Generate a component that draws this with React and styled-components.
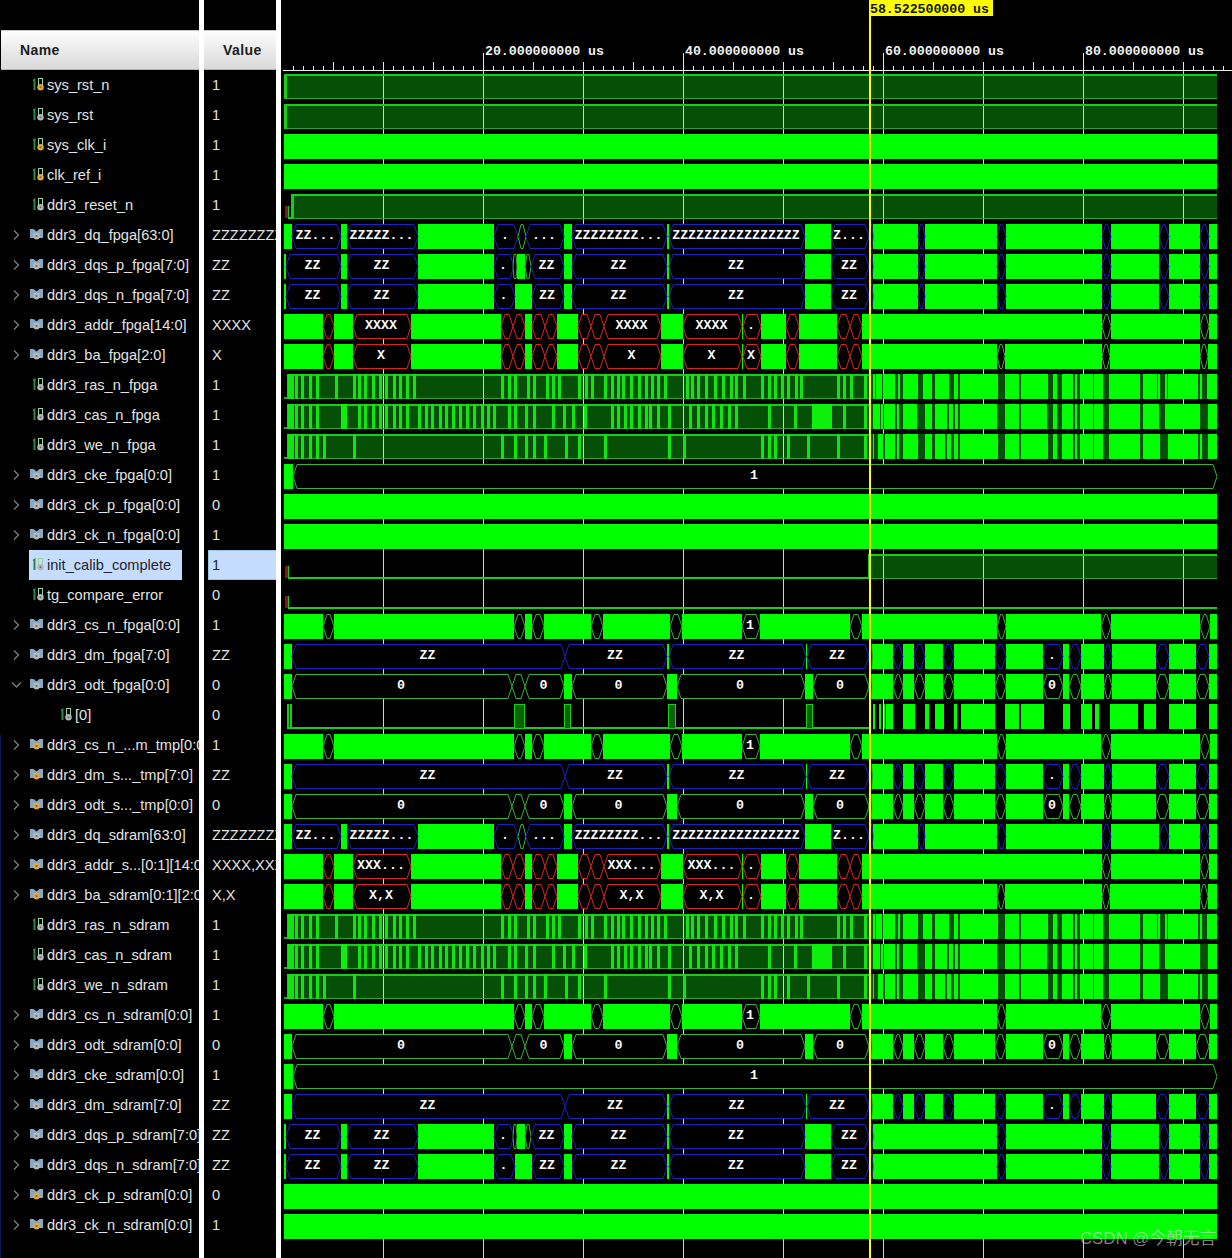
import React from 'react';
import styled, { createGlobalStyle } from 'styled-components';

const BRIGHT = '#00ff00';
const DARK = '#064f06';
const EDGE = '#18cc18';
const LOW = '#2aa52a';
const BLUE = '#1a22c0';
const RED = '#d8281c';
const GREEN = '#36b436';
const WAVE_END = 1217;
const CURSOR_X = 869;

const rowTop = (i) => 70 + i * 30;

// dq style rows, after the cursor
const DQ_GAPS = [[869, 873], [918, 925], [997, 1006], [1102, 1111], [1159, 1169], [1200, 1209]].map(([a, b]) => [a, b, BLUE]);
const SDRAM_GAPS = [[869, 873], [997, 1006], [1102, 1111], [1159, 1169], [1200, 1209]].map(([a, b]) => [a, b, BLUE]);
const DM_GAPS = (color, label) => [
  [869, 872, color], [893, 903, color], [914, 925, color], [943, 954, color], [995, 1006, color],
  [1043, 1063, color, label], [1069, 1081, color], [1104, 1112, color], [1156, 1169, color], [1196, 1209, color],
];

const dq = (first, second, third, last, gaps = DQ_GAPS) => ({
  kind: 'bus',
  segs: [
    [292, 341, BLUE, first], [347, 418, BLUE, second], [494, 518, BLUE, '.'], [518, 526, GREEN],
    [526, 564, BLUE, '...'], [572, 667, BLUE, third], [669, 805, BLUE, 'ZZZZZZZZZZZZZZZZ'], [831, 869, BLUE, last],
    ...gaps,
  ],
});

const dqsP = (gaps = DQ_GAPS) => ({
  kind: 'bus',
  segs: [
    [286, 341, BLUE, 'ZZ'], [347, 418, BLUE, 'ZZ'], [494, 514, BLUE, '.'], [513, 517, GREEN], [525, 531, GREEN],
    [531, 564, BLUE, 'ZZ'], [572, 667, BLUE, 'ZZ'], [669, 805, BLUE, 'ZZ'], [831, 869, BLUE, 'ZZ'],
    ...gaps,
  ],
});

const dqsN = (gaps = DQ_GAPS) => ({
  kind: 'bus',
  segs: [
    [286, 341, BLUE, 'ZZ'], [347, 418, BLUE, 'ZZ'], [494, 515, BLUE, '.'],
    [532, 564, BLUE, 'ZZ'], [572, 667, BLUE, 'ZZ'], [669, 805, BLUE, 'ZZ'], [831, 869, BLUE, 'ZZ'],
    ...gaps,
  ],
});

const addrRow = (one, two, three, tail, extra) => ({
  kind: 'bus',
  segs: [
    [323, 334, RED], [353, 411, RED, one], [501, 513, RED], [513, 525, RED], [532, 545, RED], [545, 557, RED],
    [578, 591, RED], [591, 604, RED], [604, 661, RED, two], [683, 742, RED, three], [743, 761, RED, tail],
    [786, 799, RED], [837, 850, RED], [850, 862, RED],
    ...extra,
  ],
});

const ADDR_TAIL = [[1102, 1111, GREEN], [1200, 1209, GREEN]];
const BA_TAIL = [[997, 1005, GREEN], [1102, 1110, GREEN], [1200, 1208, GREEN]];

const CS = {
  kind: 'bus',
  segs: [
    [323, 334, GREEN], [514, 525, GREEN], [532, 544, GREEN], [591, 603, GREEN], [670, 682, GREEN],
    [742, 760, GREEN, '1'], [850, 862, GREEN], [997, 1006, GREEN], [1101, 1111, GREEN], [1200, 1210, GREEN],
  ],
};

const DM = {
  kind: 'bus',
  segs: [[292, 565, BLUE, 'ZZ'], [565, 667, BLUE, 'ZZ'], [669, 806, BLUE, 'ZZ'], [807, 869, BLUE, 'ZZ'], ...DM_GAPS(BLUE, '.')],
};

const ODT = {
  kind: 'bus',
  segs: [
    [292, 512, GREEN, '0'], [512, 525, GREEN], [525, 564, GREEN, '0'], [572, 667, GREEN, '0'],
    [677, 805, GREEN, '0'], [813, 869, GREEN, '0'], ...DM_GAPS(GREEN, '0'),
  ],
};

const CKE = { kind: 'bus', segs: [[293, WAVE_END, GREEN, '1']] };
const CLOCK = { kind: 'full' };

const RAS = {
  kind: 'signal',
  from: 288,
  pulses: [288, 291, 295, 301, 309, 316, 335, 353, 358, 364, 372, 379, 385, 393, 399, 406, 413, 501, 508, 514, 527, 533, 546, 552, 558, 578, 585, 591, 604, 611, 617, 622, 630, 638, 645, 651, 657, 664, 686, 691, 697, 705, 714, 722, 730, 735, 743, 761, 768, 774, 781, 787, 795, 800, 837, 843, 850, 864],
  blocks: [],
  tail: [[871, 873], [875, 876], [882, 883], [895, 898], [900, 903], [918, 923], [932, 935], [949, 954], [958, 960], [998, 1005], [1019, 1021], [1048, 1053], [1057, 1062], [1073, 1075], [1077, 1080], [1093, 1094], [1103, 1109], [1140, 1143], [1157, 1158], [1160, 1165], [1167, 1168], [1198, 1200], [1202, 1207]],
};

const CAS = {
  kind: 'signal',
  from: 288,
  pulses: [288, 291, 295, 301, 309, 316, 358, 364, 372, 379, 385, 393, 399, 406, 418, 425, 431, 439, 445, 452, 459, 466, 473, 481, 487, 493, 508, 514, 525, 533, 552, 563, 572, 584, 611, 617, 624, 630, 638, 645, 649, 657, 668, 689, 697, 705, 712, 720, 728, 735, 768, 794, 843, 864],
  blocks: [[341, 347], [812, 832]],
  tail: [[871, 873], [880, 881], [883, 884], [895, 897], [899, 903], [917, 925], [932, 935], [947, 949], [953, 955], [958, 960], [997, 1005], [1019, 1021], [1047, 1053], [1057, 1062], [1073, 1075], [1077, 1080], [1093, 1094], [1103, 1109], [1140, 1143], [1159, 1165], [1200, 1208]],
};

const WE = {
  kind: 'signal',
  from: 288,
  pulses: [288, 291, 295, 301, 309, 316, 323, 353, 501, 514, 525, 533, 544, 565, 578, 604, 668, 683, 761, 768, 774, 787, 807, 837, 864],
  blocks: [],
  tail: [[871, 873], [874, 878], [883, 885], [895, 897], [899, 903], [918, 925], [932, 935], [945, 947], [951, 954], [958, 960], [998, 1005], [1019, 1021], [1048, 1053], [1057, 1062], [1073, 1075], [1077, 1080], [1093, 1094], [1103, 1109], [1140, 1143], [1160, 1168], [1198, 1200], [1202, 1208]],
};

const ODT_BIT = {
  kind: 'low',
  boxes: [[287, 289], [290, 292], [514, 525], [564, 571], [668, 676], [806, 813]],
  lowTo: 871,
  tail: [[873, 875], [879, 881], [884, 885], [886, 893], [903, 915], [925, 929], [935, 944], [954, 957], [961, 995], [1005, 1019], [1021, 1044], [1063, 1070], [1081, 1092], [1095, 1099], [1110, 1138], [1144, 1156], [1169, 1196], [1209, 1217]],
};

const SIGNALS = [
  { name: 'sys_rst_n', value: '1', icon: 'leaf', tone: 'gold', wave: { kind: 'signal', pulses: [], blocks: [] } },
  { name: 'sys_rst', value: '1', icon: 'leaf', tone: 'gray', wave: { kind: 'signal', pulses: [], blocks: [] } },
  { name: 'sys_clk_i', value: '1', icon: 'leaf', tone: 'gold', wave: CLOCK },
  { name: 'clk_ref_i', value: '1', icon: 'leaf', tone: 'gold', wave: CLOCK },
  { name: 'ddr3_reset_n', value: '1', icon: 'leaf', tone: 'gray', wave: { kind: 'signal', pulses: [], blocks: [], from: 292, stub: true } },
  { name: 'ddr3_dq_fpga[63:0]', value: 'ZZZZZZZZ', icon: 'bus', tone: 'gray', wave: dq('ZZ...', 'ZZZZZ...', 'ZZZZZZZZ...', 'Z...') },
  { name: 'ddr3_dqs_p_fpga[7:0]', value: 'ZZ', icon: 'bus', tone: 'gray', wave: dqsP() },
  { name: 'ddr3_dqs_n_fpga[7:0]', value: 'ZZ', icon: 'bus', tone: 'gray', wave: dqsN() },
  { name: 'ddr3_addr_fpga[14:0]', value: 'XXXX', icon: 'bus', tone: 'gray', wave: addrRow('XXXX', 'XXXX', 'XXXX', '.', ADDR_TAIL) },
  { name: 'ddr3_ba_fpga[2:0]', value: 'X', icon: 'bus', tone: 'gray', wave: addrRow('X', 'X', 'X', 'X', BA_TAIL) },
  { name: 'ddr3_ras_n_fpga', value: '1', icon: 'leaf', tone: 'gray', wave: RAS },
  { name: 'ddr3_cas_n_fpga', value: '1', icon: 'leaf', tone: 'gray', wave: CAS },
  { name: 'ddr3_we_n_fpga', value: '1', icon: 'leaf', tone: 'gray', wave: WE },
  { name: 'ddr3_cke_fpga[0:0]', value: '1', icon: 'bus', tone: 'gray', wave: CKE },
  { name: 'ddr3_ck_p_fpga[0:0]', value: '0', icon: 'bus', tone: 'gray', wave: CLOCK },
  { name: 'ddr3_ck_n_fpga[0:0]', value: '1', icon: 'bus', tone: 'gray', wave: CLOCK },
  { name: 'init_calib_complete', value: '1', icon: 'leaf', tone: 'gray', selected: true, wave: { kind: 'signal', pulses: [], blocks: [], from: CURSOR_X, stub: true } },
  { name: 'tg_compare_error', value: '0', icon: 'leaf', tone: 'gray', wave: { kind: 'signal', pulses: [], blocks: [], from: WAVE_END, stub: true } },
  { name: 'ddr3_cs_n_fpga[0:0]', value: '1', icon: 'bus', tone: 'gray', wave: CS },
  { name: 'ddr3_dm_fpga[7:0]', value: 'ZZ', icon: 'bus', tone: 'gray', wave: DM },
  { name: 'ddr3_odt_fpga[0:0]', value: '0', icon: 'bus', tone: 'gray', open: true, wave: ODT },
  { name: '[0]', value: '0', icon: 'leaf', tone: 'gray', child: true, wave: ODT_BIT },
  { name: 'ddr3_cs_n_...m_tmp[0:0]', value: '1', icon: 'bus', tone: 'gold', wave: CS },
  { name: 'ddr3_dm_s..._tmp[7:0]', value: 'ZZ', icon: 'bus', tone: 'gold', wave: DM },
  { name: 'ddr3_odt_s..._tmp[0:0]', value: '0', icon: 'bus', tone: 'gold', wave: ODT },
  { name: 'ddr3_dq_sdram[63:0]', value: 'ZZZZZZZZ', icon: 'bus', tone: 'gray', wave: dq('ZZ...', 'ZZZZZ...', 'ZZZZZZZZ...', 'Z...') },
  { name: 'ddr3_addr_s...[0:1][14:0]', value: 'XXXX,XXX', icon: 'bus', tone: 'gold', wave: addrRow('XXX...', 'XXX...', 'XXX...', '.', ADDR_TAIL) },
  { name: 'ddr3_ba_sdram[0:1][2:0]', value: 'X,X', icon: 'bus', tone: 'gold', wave: addrRow('X,X', 'X,X', 'X,X', '.', BA_TAIL) },
  { name: 'ddr3_ras_n_sdram', value: '1', icon: 'leaf', tone: 'gray', wave: RAS },
  { name: 'ddr3_cas_n_sdram', value: '1', icon: 'leaf', tone: 'gray', wave: CAS },
  { name: 'ddr3_we_n_sdram', value: '1', icon: 'leaf', tone: 'gray', wave: WE },
  { name: 'ddr3_cs_n_sdram[0:0]', value: '1', icon: 'bus', tone: 'gray', wave: CS },
  { name: 'ddr3_odt_sdram[0:0]', value: '0', icon: 'bus', tone: 'gray', wave: ODT },
  { name: 'ddr3_cke_sdram[0:0]', value: '1', icon: 'bus', tone: 'gray', wave: CKE },
  { name: 'ddr3_dm_sdram[7:0]', value: 'ZZ', icon: 'bus', tone: 'gray', wave: DM },
  { name: 'ddr3_dqs_p_sdram[7:0]', value: 'ZZ', icon: 'bus', tone: 'gray', wave: dqsP(SDRAM_GAPS) },
  { name: 'ddr3_dqs_n_sdram[7:0]', value: 'ZZ', icon: 'bus', tone: 'gray', wave: dqsN(SDRAM_GAPS) },
  { name: 'ddr3_ck_p_sdram[0:0]', value: '0', icon: 'bus', tone: 'gold', wave: CLOCK },
  { name: 'ddr3_ck_n_sdram[0:0]', value: '1', icon: 'bus', tone: 'gold', wave: CLOCK },
];

const GRID = [383, 483, 583, 683, 783, 883, 983, 1083, 1183];
const RULER_LABELS = [
  { x: 485, text: '20.000000000 us' },
  { x: 685, text: '40.000000000 us' },
  { x: 885, text: '60.000000000 us' },
  { x: 1085, text: '80.000000000 us' },
];
const TICKS = Array.from({ length: 94 }, (_, i) => 293 + i * 10);

const GlobalStyle = createGlobalStyle`
  html, body {
    margin: 0;
    padding: 0;
    background: #000;
    overflow: hidden;
  }
`;

const Page = styled.div`
  position: relative;
  display: flex;
  width: 1232px;
  height: 1258px;
  background: #fff;
  font-family: "Liberation Sans", Arial, sans-serif;
  overflow: hidden;
`;

const Column = styled.div`
  width: ${(p) => p.$width}px;
  margin-right: 5px;
  padding-top: 30px;
  box-sizing: border-box;
  background: #000;
  overflow: hidden;
`;

const NameColumn = styled(Column)`
  background: linear-gradient(#0c1c50, #0c1c50) 0 735px / 1px 100% no-repeat, #000;
`;

const HeaderCell = styled.div`
  height: 40px;
  margin-left: ${(p) => p.$inset}px;
  padding-left: ${(p) => p.$pad}px;
  box-sizing: border-box;
  display: flex;
  align-items: center;
  background: linear-gradient(#fdfdfd, #d9d9d9);
  border-top: 1px solid #c8c8c8;
  border-bottom: 1px solid #b4b4b4;
  color: #1c1c1c;
  font-size: 14px;
  font-weight: 700;
  letter-spacing: 0.4px;
`;

const NameRow = styled.div`
  height: 30px;
  display: flex;
  align-items: center;
  padding-left: ${(p) => (p.$child ? 39 : 11)}px;
  white-space: nowrap;
`;

const Chevron = styled.svg`
  flex: none;
  width: 19px;
  height: 14px;
`;

const IconSlot = styled.span`
  flex: none;
  width: 17px;
  height: 14px;
  display: flex;
  justify-content: ${(p) => (p.$leaf ? 'flex-end' : 'flex-start')};
  padding-right: ${(p) => (p.$leaf ? 3 : 0)}px;
  box-sizing: border-box;
`;

const Label = styled.span`
  font-size: 14.6px;
  line-height: 30px;
  height: 30px;
  color: ${(p) => (p.$selected ? '#20242c' : '#e4e4e4')};
  padding-right: ${(p) => (p.$selected ? 11 : 0)}px;
`;

const SelectedBand = styled.div`
  display: flex;
  align-items: center;
  height: 30px;
  margin-left: 18px;
  padding-left: 1px;
  background: #c6dcff;
`;

const ValueRow = styled.div`
  height: 30px;
  box-sizing: border-box;
  margin-left: ${(p) => (p.$selected ? 4 : 0)}px;
  padding-left: ${(p) => (p.$selected ? 3 : 8)}px;
  font-size: 14.6px;
  line-height: ${(p) => (p.$selected ? 28 : 30)}px;
  white-space: nowrap;
  overflow: hidden;
  color: ${(p) => (p.$selected ? '#20242c' : '#e4e4e4')};
  background: ${(p) => (p.$selected ? '#c6dcff' : 'transparent')};
  border: ${(p) => (p.$selected ? '1px solid #9cc4e4' : '0')};
  border-right: 0;
`;

const WavePanel = styled.div`
  flex: 1;
  background: #000;
`;

const WaveCanvas = styled.svg`
  display: block;
  width: 951px;
  height: 1258px;
`;

const MonoText = styled.text`
  font-family: "Liberation Mono", "DejaVu Sans Mono", monospace;
  font-weight: 700;
  font-size: 13.3px;
`;

const BusText = styled(MonoText)`
  fill: #fff;
  text-anchor: middle;
`;

const Watermark = styled.div`
  position: absolute;
  left: 1080px;
  top: 1227px;
  font-family: "Liberation Sans", "Noto Sans CJK SC", sans-serif;
  font-size: 16.8px;
  line-height: 24px;
  color: rgba(214, 214, 214, 0.62);
  white-space: nowrap;
`;

const dotColor = (tone) => (tone === 'gold' ? '#e0a83c' : '#b4b8bc');

const LeafIcon = ({ tone }) => (
  <svg width="11" height="13" viewBox="0 0 11 13">
    <path d="M0 1.5 L2.5 0 V12 H0.5 V3 H0 Z" fill="#2e8a46" />
    <rect x="5.5" y="0.5" width="4" height="8" fill="none" stroke="#9ed0a8" strokeWidth="1" />
    <circle cx="7.5" cy="9.3" r="3.2" fill={dotColor(tone)} />
    <circle cx="7.5" cy="9.3" r="1" fill="#6a6a5a" />
  </svg>
);

const BusIcon = ({ tone }) => (
  <svg width="13" height="13" viewBox="0 0 13 13">
    <path d="M0 1 H3.5 L6.5 3.5 L9.5 1 H13 V10 H0 Z" fill="#86a8c4" />
    <circle cx="6.5" cy="8" r="3.4" fill={dotColor(tone)} />
    <circle cx="6.5" cy="8" r="1.1" fill="#6a6a5a" />
  </svg>
);

const SignalName = ({ row }) => {
  const inner = (
    <>
      <IconSlot $leaf={row.icon === 'leaf'}>
        {row.icon === 'leaf' ? <LeafIcon tone={row.tone} /> : <BusIcon tone={row.tone} />}
      </IconSlot>
      <Label $selected={row.selected}>{row.name}</Label>
    </>
  );
  return (
    <NameRow $child={row.child}>
      {row.icon === 'bus' && (
        <Chevron viewBox="0 0 19 14">
          <path d={row.open ? 'M1 4.5 L5.5 9 L10 4.5' : 'M3 2.5 L7.5 7 L3 11.5'} fill="none" stroke="#7a7a7a" strokeWidth="1.4" />
        </Chevron>
      )}
      {row.icon === 'leaf' && !row.selected && <Chevron viewBox="0 0 19 14" />}
      {row.selected ? <SelectedBand>{inner}</SelectedBand> : inner}
    </NameRow>
  );
};

// dark body of a signal goes under the grid lines, everything else above them
const WaveBack = ({ wave, index }) => {
  if (wave.kind !== 'signal' || (wave.from || 285) >= WAVE_END) return null;
  const y = rowTop(index) + 4;
  const from = wave.from || 285;
  return <rect x={from} y={y} width={WAVE_END - from} height={25} fill={DARK} />;
};

const BusSegment = ({ seg, y }) => {
  const [a, b, color, label] = seg;
  const taper = Math.min(4, (b - a) / 2 - 1);
  const mid = y + 12.5;
  const points = [
    [a, mid], [a + taper, y + 0.5], [b - taper, y + 0.5], [b, mid], [b - taper, y + 24.5], [a + taper, y + 24.5],
  ].map((p) => p.join(',')).join(' ');
  return (
    <>
      <rect x={a} y={y} width={b - a} height={25} fill="#000" />
      <polygon points={points} fill="none" stroke={color} strokeWidth="1" />
      {label && <BusText x={(a + b) / 2 - 1} y={y + 15}>{label}</BusText>}
    </>
  );
};

const WaveFront = ({ wave, index }) => {
  const top = rowTop(index);
  const y = top + 4;
  const bottom = y + 25;

  if (wave.kind === 'full') {
    return <rect x={284} y={y} width={WAVE_END - 284} height={25} fill={BRIGHT} />;
  }

  if (wave.kind === 'bus') {
    return (
      <>
        <rect x={284} y={y} width={WAVE_END - 284} height={25} fill={BRIGHT} />
        {wave.segs.map((seg) => <BusSegment key={seg[0]} seg={seg} y={y} />)}
      </>
    );
  }

  if (wave.kind === 'low') {
    return (
      <>
        <rect x={287} y={bottom - 2} width={wave.lowTo - 287} height={2} fill={EDGE} />
        {wave.boxes.map(([a, b]) => (
          <rect key={a} x={a + 0.5} y={y + 0.5} width={b - a - 1} height={24} fill="#0a620a" stroke={EDGE} />
        ))}
        {wave.tail.map(([a, b]) => <rect key={a} x={a} y={y} width={b - a} height={25} fill={BRIGHT} />)}
      </>
    );
  }

  const from = wave.from || 285;
  return (
    <>
      {wave.stub && <rect x={285} y={top + 16} width={3} height={12} fill="#8c1410" />}
      {wave.stub && <rect x={288} y={top + 16} width={1} height={13} fill={EDGE} />}
      {wave.stub && <rect x={288} y={bottom - 2} width={from - 288} height={2} fill={EDGE} />}
      {!wave.stub && from > 285 && <rect x={284} y={bottom - 2} width={from - 284} height={2} fill={LOW} />}
      {from < WAVE_END && <rect x={from} y={y} width={WAVE_END - from} height={2} fill={EDGE} />}
      {from < WAVE_END && <rect x={from} y={bottom - 1} width={WAVE_END - from} height={1} fill={LOW} />}
      {from < WAVE_END && <rect x={from - 1} y={y} width={3} height={25} fill={EDGE} />}
      {wave.pulses.map((x) => <rect key={x} x={x} y={y} width={3} height={25} fill="#12e412" />)}
      {wave.blocks.map(([a, b]) => <rect key={a} x={a} y={y} width={b - a} height={25} fill="#0cf00c" />)}
      {wave.tail && <rect x={CURSOR_X} y={y} width={WAVE_END - CURSOR_X} height={25} fill={BRIGHT} />}
      {wave.tail && wave.tail.map(([a, b]) => <rect key={a} x={a} y={y} width={b - a} height={25} fill={DARK} />)}
    </>
  );
};

const tickHeight = (x) => {
  if ((x - 283) % 200 === 0) return 17;
  if ((x - 283) % 50 === 0) return 8;
  return 4;
};

const Ruler = () => (
  <>
    <rect x={283} y={70} width={949} height={1} fill="#f0f0f0" />
    {TICKS.map((x) => <rect key={x} x={x} y={70 - tickHeight(x)} width={1} height={tickHeight(x)} fill="#e8e8e8" />)}
    {RULER_LABELS.map((l) => <MonoText key={l.x} x={l.x} y={55} fill="#f2f2f2" textLength={119}>{l.text}</MonoText>)}
  </>
);

const Cursor = () => (
  <>
    <rect x={CURSOR_X} y={16} width={2} height={1242} fill="#ffff00" />
    <rect x={CURSOR_X} y={0} width={124} height={16} fill="#ffff00" />
    <MonoText x={870} y={13} fill="#111" textLength={119}>58.522500000 us</MonoText>
  </>
);

const WaveView = () => (
  <WaveCanvas viewBox="281 0 951 1258">
    {SIGNALS.map((row, i) => <WaveBack key={row.name} wave={row.wave} index={i} />)}
    {GRID.map((x) => <rect key={x} x={x} y={70} width={1} height={1188} fill="#cfd6cf" />)}
    {SIGNALS.map((row, i) => <WaveFront key={row.name} wave={row.wave} index={i} />)}
    <Ruler />
    <Cursor />
  </WaveCanvas>
);

export default function App() {
  return (
    <Page>
      <GlobalStyle />
      <NameColumn $width={199}>
        <HeaderCell $inset={1} $pad={19}>Name</HeaderCell>
        {SIGNALS.map((row) => <SignalName key={row.name} row={row} />)}
      </NameColumn>
      <Column $width={72}>
        <HeaderCell $inset={0} $pad={19}>Value</HeaderCell>
        {SIGNALS.map((row) => <ValueRow key={row.name} $selected={row.selected}>{row.value}</ValueRow>)}
      </Column>
      <WavePanel>
        <WaveView />
      </WavePanel>
      <Watermark>CSDN @今朝无言</Watermark>
    </Page>
  );
}
